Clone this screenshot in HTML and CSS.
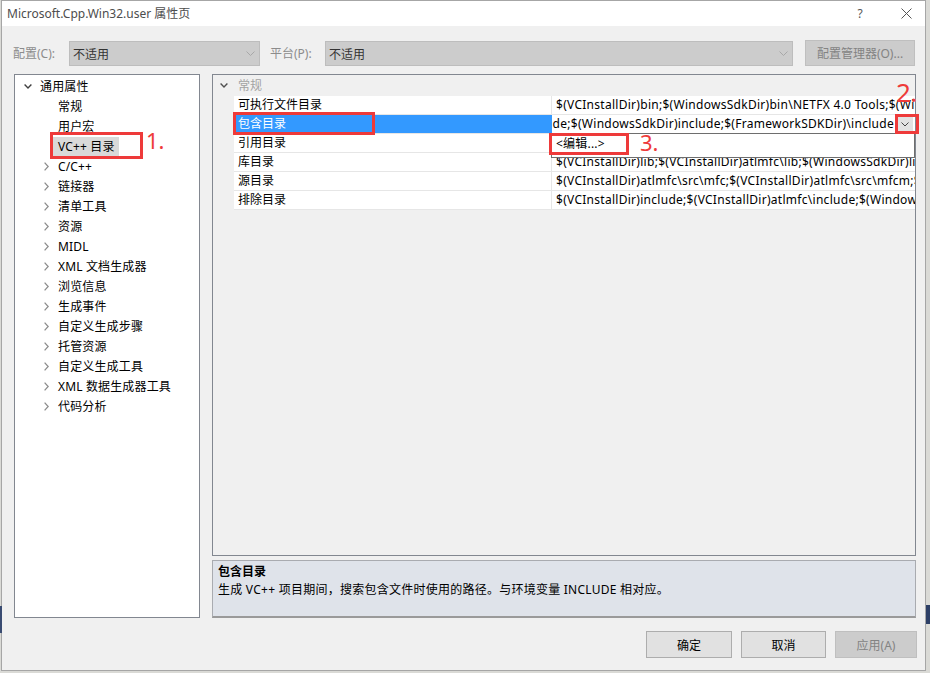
FILE: index.html
```html
<!DOCTYPE html>
<html lang="zh-CN">
<head>
<meta charset="utf-8">
<title>Microsoft.Cpp.Win32.user 属性页</title>
<link rel="stylesheet" href="styles.css">
</head>
<body>
<div class="desktop">
  <div class="strip strip-left"></div>
  <div class="strip strip-right"></div>

  <div class="window">
    <div class="titlebar">
      <span class="title">Microsoft.Cpp.Win32.user 属性页</span>
      <span class="help">?</span>
      <span class="close"><svg width="11" height="11" viewBox="0 0 11 11"><path d="M0.5 0.5 L10.5 10.5 M10.5 0.5 L0.5 10.5" stroke="#555" stroke-width="1" fill="none"/></svg></span>
    </div>

    <div class="toolbar">
      <span class="tlabel tlabel-config">配置(C):</span>
      <div class="combo combo-config"><span>不适用</span><svg width="9" height="5" viewBox="0 0 9 5"><path d="M0.5 0.5 L4.5 4.5 L8.5 0.5" stroke="#a8a8a8" stroke-width="1" fill="none"/></svg></div>
      <span class="tlabel tlabel-platform">平台(P):</span>
      <div class="combo combo-platform"><span>不适用</span><svg width="9" height="5" viewBox="0 0 9 5"><path d="M0.5 0.5 L4.5 4.5 L8.5 0.5" stroke="#a8a8a8" stroke-width="1" fill="none"/></svg></div>
      <button class="btn btn-disabled btn-cfg">配置管理器(O)...</button>
    </div>

    <div class="main">
      <div class="tree">
        <div class="trow lvl0"><span class="twisty"><svg width="8" height="5" viewBox="0 0 8 5"><path d="M0.6 0.6 L4 4 L7.4 0.6" stroke="#404040" stroke-width="1.4" fill="none"/></svg></span><span class="tlab">通用属性</span></div>
        <div class="trow lvl1"><span class="twisty"></span><span class="tlab">常规</span></div>
        <div class="trow lvl1"><span class="twisty"></span><span class="tlab">用户宏</span></div>
        <div class="trow lvl1"><span class="twisty"></span><span class="tlab selected">VC++ 目录</span></div>
        <div class="trow lvl1"><span class="twisty"><svg class="chev" width="5" height="9" viewBox="0 0 5 9"><path d="M0.6 0.6 L4.2 4.5 L0.6 8.4" stroke="#8c8c8c" stroke-width="1.3" fill="none"/></svg></span><span class="tlab">C/C++</span></div>
        <div class="trow lvl1"><span class="twisty"><svg class="chev" width="5" height="9" viewBox="0 0 5 9"><path d="M0.6 0.6 L4.2 4.5 L0.6 8.4" stroke="#8c8c8c" stroke-width="1.3" fill="none"/></svg></span><span class="tlab">链接器</span></div>
        <div class="trow lvl1"><span class="twisty"><svg class="chev" width="5" height="9" viewBox="0 0 5 9"><path d="M0.6 0.6 L4.2 4.5 L0.6 8.4" stroke="#8c8c8c" stroke-width="1.3" fill="none"/></svg></span><span class="tlab">清单工具</span></div>
        <div class="trow lvl1"><span class="twisty"><svg class="chev" width="5" height="9" viewBox="0 0 5 9"><path d="M0.6 0.6 L4.2 4.5 L0.6 8.4" stroke="#8c8c8c" stroke-width="1.3" fill="none"/></svg></span><span class="tlab">资源</span></div>
        <div class="trow lvl1"><span class="twisty"><svg class="chev" width="5" height="9" viewBox="0 0 5 9"><path d="M0.6 0.6 L4.2 4.5 L0.6 8.4" stroke="#8c8c8c" stroke-width="1.3" fill="none"/></svg></span><span class="tlab">MIDL</span></div>
        <div class="trow lvl1"><span class="twisty"><svg class="chev" width="5" height="9" viewBox="0 0 5 9"><path d="M0.6 0.6 L4.2 4.5 L0.6 8.4" stroke="#8c8c8c" stroke-width="1.3" fill="none"/></svg></span><span class="tlab">XML 文档生成器</span></div>
        <div class="trow lvl1"><span class="twisty"><svg class="chev" width="5" height="9" viewBox="0 0 5 9"><path d="M0.6 0.6 L4.2 4.5 L0.6 8.4" stroke="#8c8c8c" stroke-width="1.3" fill="none"/></svg></span><span class="tlab">浏览信息</span></div>
        <div class="trow lvl1"><span class="twisty"><svg class="chev" width="5" height="9" viewBox="0 0 5 9"><path d="M0.6 0.6 L4.2 4.5 L0.6 8.4" stroke="#8c8c8c" stroke-width="1.3" fill="none"/></svg></span><span class="tlab">生成事件</span></div>
        <div class="trow lvl1"><span class="twisty"><svg class="chev" width="5" height="9" viewBox="0 0 5 9"><path d="M0.6 0.6 L4.2 4.5 L0.6 8.4" stroke="#8c8c8c" stroke-width="1.3" fill="none"/></svg></span><span class="tlab">自定义生成步骤</span></div>
        <div class="trow lvl1"><span class="twisty"><svg class="chev" width="5" height="9" viewBox="0 0 5 9"><path d="M0.6 0.6 L4.2 4.5 L0.6 8.4" stroke="#8c8c8c" stroke-width="1.3" fill="none"/></svg></span><span class="tlab">托管资源</span></div>
        <div class="trow lvl1"><span class="twisty"><svg class="chev" width="5" height="9" viewBox="0 0 5 9"><path d="M0.6 0.6 L4.2 4.5 L0.6 8.4" stroke="#8c8c8c" stroke-width="1.3" fill="none"/></svg></span><span class="tlab">自定义生成工具</span></div>
        <div class="trow lvl1"><span class="twisty"><svg class="chev" width="5" height="9" viewBox="0 0 5 9"><path d="M0.6 0.6 L4.2 4.5 L0.6 8.4" stroke="#8c8c8c" stroke-width="1.3" fill="none"/></svg></span><span class="tlab">XML 数据生成器工具</span></div>
        <div class="trow lvl1"><span class="twisty"><svg class="chev" width="5" height="9" viewBox="0 0 5 9"><path d="M0.6 0.6 L4.2 4.5 L0.6 8.4" stroke="#8c8c8c" stroke-width="1.3" fill="none"/></svg></span><span class="tlab">代码分析</span></div>
      </div>

      <div class="right">
        <div class="grid">
          <div class="gcat">
            <span class="gtwisty"><svg width="8" height="5" viewBox="0 0 8 5"><path d="M0.6 0.6 L4 4 L7.4 0.6" stroke="#505050" stroke-width="1.4" fill="none"/></svg></span>
            <span class="gcat-label">常规</span>
          </div>
          <div class="grow">
            <span class="gname">可执行文件目录</span>
            <span class="gval">$(VCInstallDir)bin;$(WindowsSdkDir)bin\NETFX 4.0 Tools;$(WindowsSdkDir)bin;$(VSInstallDir)Common7\Tools\bin;$(VSInstallDir)Common7\tools;$(VSInstallDir)Common7\ide</span>
          </div>
          <div class="grow grow-selected">
            <span class="gname">包含目录</span>
            <span class="gval gval-edit">
              <span class="edit-clip"><span class="edit-text">$(VCInstallDir)include;$(VCInstallDir)atlmfc\include;$(WindowsSdkDir)include;$(FrameworkSDKDir)\include</span></span>
              <span class="ddbtn"><svg width="8" height="5" viewBox="0 0 8 5"><path d="M0.5 0.5 L4 4 L7.5 0.5" stroke="#444" stroke-width="1" fill="none"/></svg></span>
            </span>
          </div>
          <div class="grow">
            <span class="gname">引用目录</span>
            <span class="gval">$(VCInstallDir)atlmfc\lib;$(VCInstallDir)lib</span>
          </div>
          <div class="grow">
            <span class="gname">库目录</span>
            <span class="gval">$(VCInstallDir)lib;$(VCInstallDir)atlmfc\lib;$(WindowsSdkDir)lib;$(FrameworkSDKDir)\lib</span>
          </div>
          <div class="grow">
            <span class="gname">源目录</span>
            <span class="gval">$(VCInstallDir)atlmfc\src\mfc;$(VCInstallDir)atlmfc\src\mfcm;$(VCInstallDir)atlmfc\src\atl;$(VCInstallDir)crt\src</span>
          </div>
          <div class="grow">
            <span class="gname">排除目录</span>
            <span class="gval">$(VCInstallDir)include;$(VCInstallDir)atlmfc\include;$(WindowsSdkDir)include;$(FrameworkSDKDir)\include</span>
          </div>

          <div class="popup"><span class="popup-item">&lt;编辑...&gt;</span></div>
        </div>

        <div class="desc">
          <div class="desc-title">包含目录</div>
          <div class="desc-text">生成 VC++ 项目期间，搜索包含文件时使用的路径。与环境变量 INCLUDE 相对应。</div>
        </div>
      </div>
    </div>

    <div class="footer">
      <button class="btn btn-ok">确定</button>
      <button class="btn btn-cancel">取消</button>
      <button class="btn btn-disabled btn-apply">应用(A)</button>
    </div>
  </div>

  <div class="mark mark-1"></div>
  <div class="note note-1">1.</div>
  <div class="mark mark-name"></div>
  <div class="mark mark-2"></div>
  <div class="note note-2">2.</div>
  <div class="mark mark-3"></div>
  <div class="note note-3">3.</div>
</div>
</body>
</html>
```

FILE: styles.css
```css
* { box-sizing: border-box; }

html, body {
  margin: 0;
  padding: 0;
}

body {
  background: #dadad6;
  font-family: "Noto Sans", "Noto Sans CJK SC", sans-serif;
  font-size: 12px;
  color: #000;
}

.desktop {
  position: relative;
  width: 930px;
  height: 673px;
  overflow: hidden;
}

.strip { position: absolute; }
.strip-left { left: 0; top: 606px; width: 2px; height: 27px; background: #3a4c72; }
.strip-right { left: 926px; top: 605px; width: 4px; height: 19px; background: #2d3f66; }

.window {
  margin-left: 1px;
  width: 925px;
  height: 671px;
  border: 1px solid #a6a6a6;
  background: #f0f0f0;
  display: flex;
  flex-direction: column;
}

/* title bar */
.titlebar {
  height: 25px;
  flex: none;
  background: #fff;
  display: flex;
  align-items: center;
  padding-left: 5px;
}
.title { flex: 1; color: #4d4d4d; font-size: 12px; line-height: 25px; }
.help { width: 30px; text-align: center; color: #555; font-size: 12px; margin-right: 12px; }
.close { width: 38px; height: 25px; display: flex; align-items: center; justify-content: center; }

/* toolbar */
.toolbar {
  height: 48px;
  flex: none;
  display: flex;
  align-items: flex-start;
  padding: 15px 0 0 11px;
}
.tlabel { color: #8c8c8c; line-height: 25px; }
.tlabel-config { width: 56px; }
.tlabel-platform { width: 55px; margin-left: 10px; }
.combo {
  height: 25px;
  background: #cccccc;
  border: 1px solid #bdbdbd;
  display: flex;
  align-items: center;
  justify-content: space-between;
  padding: 0 4px 0 3px;
  color: #333;
}
.combo-config { width: 191px; }
.combo-platform { width: 468px; }

.btn {
  font: inherit;
  height: 27px;
  border: 1px solid #adadad;
  background: #e1e1e1;
  color: #000;
  padding: 0;
}
.btn-disabled { background: #cccccc; border-color: #bfbfbf; color: #838383; }
.btn-cfg { width: 110px; height: 26px; margin: -1px 0 0 12px; }

/* main */
.main {
  height: 544px;
  flex: none;
  display: flex;
  gap: 12px;
  padding-left: 12px;
}

.tree {
  width: 186px;
  border: 1px solid #828790;
  background: #fff;
  padding-top: 1px;
}
.trow { height: 20px; display: flex; align-items: center; }
.lvl0 { padding-left: 6px; }
.lvl1 { padding-left: 24px; }
.twisty { width: 14px; height: 20px; display: flex; align-items: center; justify-content: center; flex: none; }
.tlab { line-height: 19px; padding: 0 4px 0 5px; white-space: nowrap; letter-spacing: 0.15px; }
.tlab.selected { background: #d9d9d9; }

.right {
  width: 704px;
  display: flex;
  flex-direction: column;
  gap: 4px;
}

.grid {
  position: relative;
  height: 482px;
  border: 1px solid #828790;
  background: #f0f0f0;
  overflow: hidden;
}
.gcat { height: 21px; display: flex; align-items: center; }
.gtwisty { width: 21px; display: flex; justify-content: center; padding-left: 1px; }
.gcat-label { padding-left: 4px; color: #a3a3a3; line-height: 20px; }

.grow {
  height: 19px;
  display: flex;
  margin-left: 21px;
  border-bottom: 1px solid #e6e6e6;
  background: #fff;
}
.gname {
  width: 318px;
  flex: none;
  padding-left: 4px;
  line-height: 18px;
  border-right: 1px solid #e6e6e6;
  white-space: nowrap;
  overflow: hidden;
}
.gval {
  flex: 1;
  min-width: 0;
  padding-left: 4px;
  line-height: 18px;
  white-space: nowrap;
  overflow: hidden;
  letter-spacing: 0.28px;
}
.grow-selected .gname { background: #3399ff; color: #fff; border-right-color: #3399ff; }
.gval-edit { display: flex; padding: 0 2px 0 0; }
.edit-clip { flex: 1; min-width: 0; display: flex; justify-content: flex-end; overflow: hidden; padding-right: 3px; }
.edit-text { flex: none; }
.ddbtn {
  width: 16px;
  height: 16px;
  margin-top: 1px;
  background: #e2e2e2;
  display: flex;
  align-items: center;
  justify-content: center;
  flex: none;
}

.popup {
  position: absolute;
  left: 338px;
  top: 58px;
  width: 364px;
  height: 25px;
  background: #fff;
  border: 1px solid #6e6e6e;
  padding-left: 4px;
}
.popup-item { line-height: 20px; letter-spacing: 0.2px; }

.desc {
  flex: 1;
  background: #dfe3ea;
  border: 1px solid #a9abb0;
  border-bottom: 2px solid #9a9a9a;
  padding: 2px 5px;
}
.desc-title { font-weight: bold; line-height: 18px; }
.desc-text { line-height: 18px; letter-spacing: 0.25px; }

/* footer */
.footer {
  flex: 1;
  display: flex;
  justify-content: flex-end;
  align-items: flex-start;
  gap: 9px;
  padding: 13px 8px 0 0;
}
.btn-ok { width: 86px; }
.btn-cancel { width: 85px; }
.btn-apply { width: 82px; }

/* annotations */
.mark {
  position: absolute;
  border: 3px solid #ee3a3a;
}
.mark-1 { left: 50px; top: 132px; width: 93px; height: 27px; }
.mark-name { left: 233px; top: 112px; width: 142px; height: 23px; }
.mark-2 { left: 895px; top: 114px; width: 24px; height: 20px; }
.mark-3 { left: 549px; top: 133px; width: 80px; height: 22px; }

.note {
  position: absolute;
  color: #ee3a3a;
  font-family: "Noto Sans", sans-serif;
  line-height: 1;
}
.note-1 { left: 146px; top: 129px; font-size: 22px; }
.note-2 { left: 896px; top: 79px; font-size: 26px; letter-spacing: -0.5px; }
.note-3 { left: 640px; top: 131px; font-size: 22px; }
```
